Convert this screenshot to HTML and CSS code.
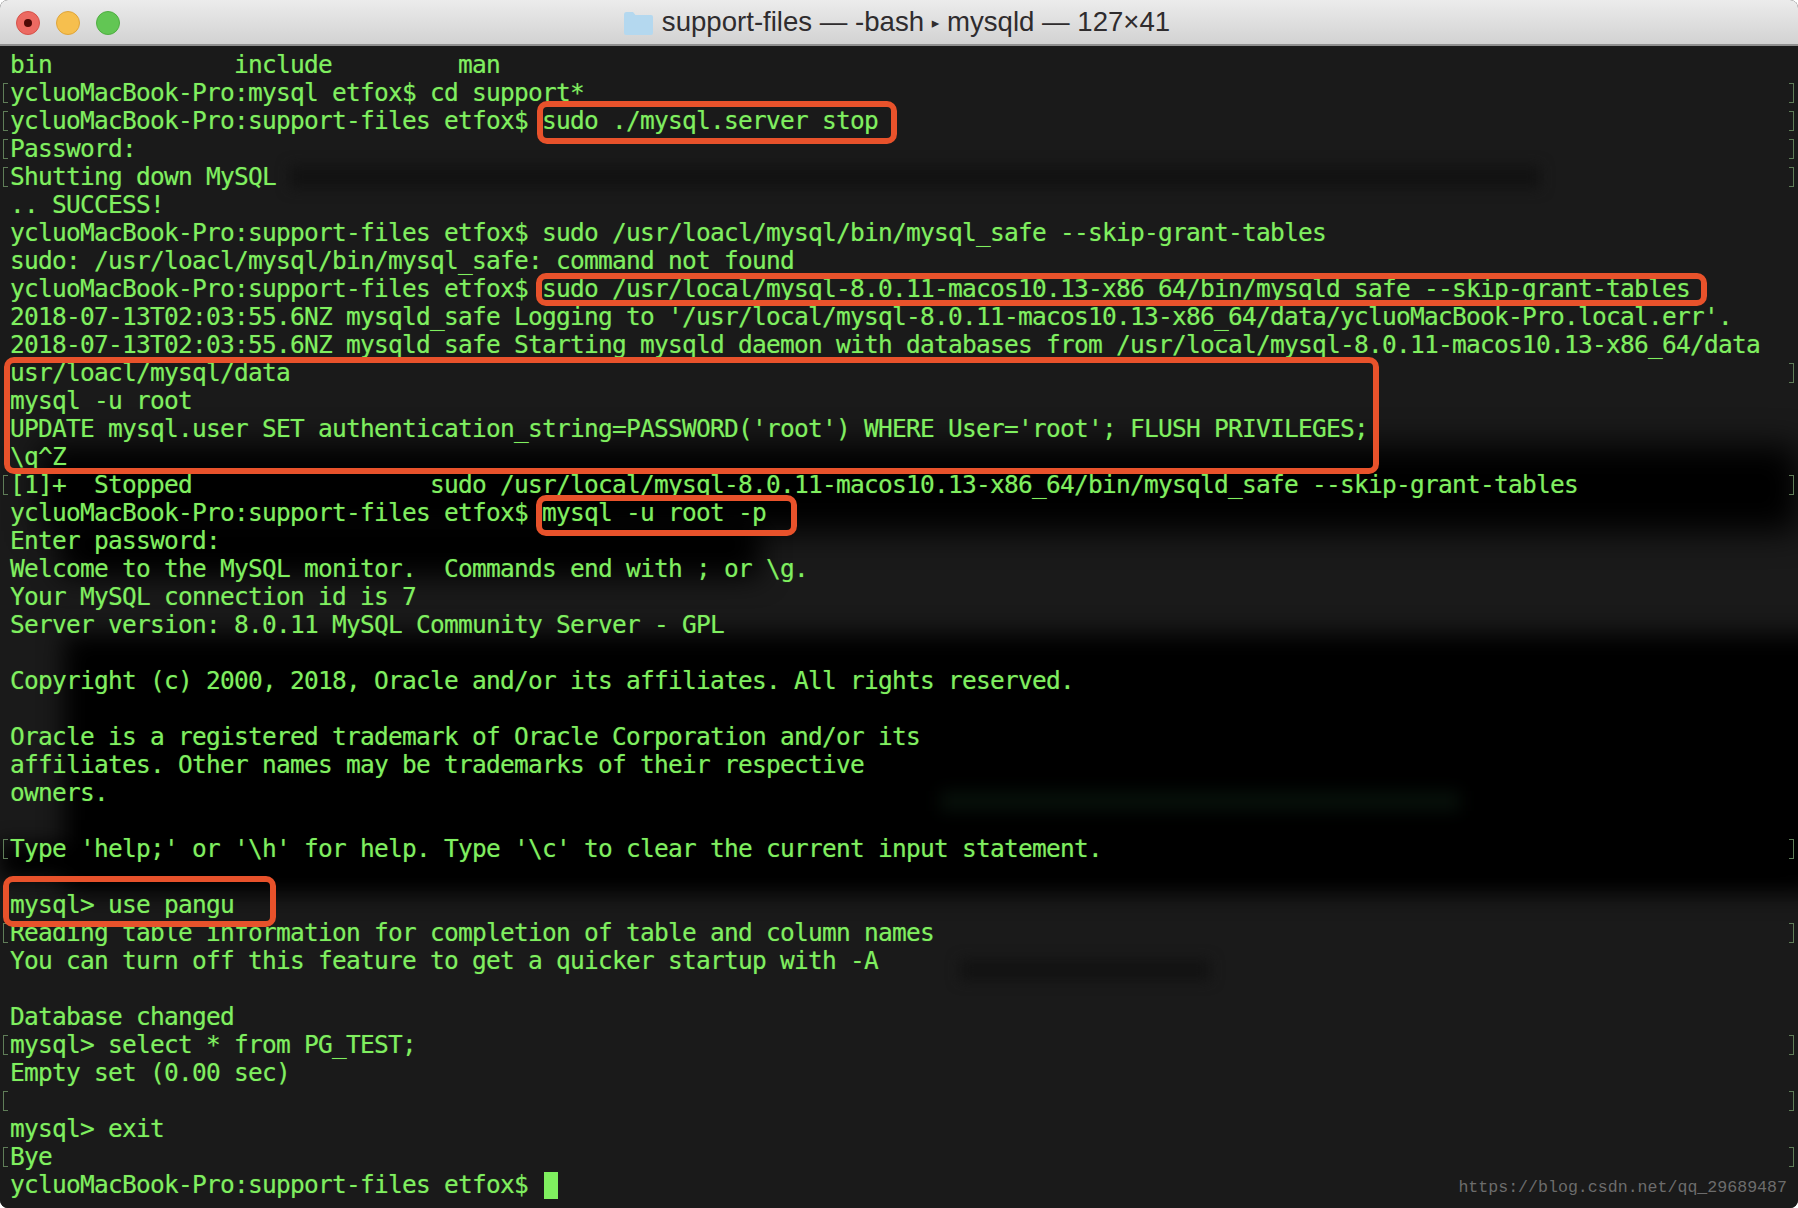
FILE: index.html
```html
<!DOCTYPE html>
<html lang="en">
<head>
<meta charset="utf-8">
<title>support-files — -bash ▸ mysqld — 127×41</title>
<link rel="stylesheet" href="styles.css">
</head>
<body>
<div class="window">
  <header class="titlebar">
    <div class="lights">
      <span class="light red"></span>
      <span class="light yellow"></span>
      <span class="light green"></span>
    </div>
    <div class="title">
      <svg class="folder" viewBox="0 0 30 24" aria-hidden="true"><path d="M1 3.5Q1 1 3 1H10L12.5 4H28Q30 4 30 6V22Q30 24 28 24H3Q1 24 1 22Z" fill="#b4d8ef"/></svg>
      <span>support-files — -bash <span class="sep">▸</span> mysqld — 127×41</span>
    </div>
    <div></div>
  </header>
  <main class="terminal">
    <div class="smear s1"></div>
    <div class="smear s2"></div>
    <div class="smear s3"></div>
    <div class="smear s4"></div>
    <div class="smear s5"></div>
    <div class="smear s6"></div>
    <div class="smear s7"></div>

    <div class="ln"><i></i><pre>bin             include         man</pre><i></i></div>
    <div class="ln m"><i></i><pre>ycluoMacBook-Pro:mysql etfox$ cd support*</pre><i></i></div>
    <div class="ln m"><i></i><pre>ycluoMacBook-Pro:support-files etfox$ sudo ./mysql.server stop</pre><i></i></div>
    <div class="ln m"><i></i><pre>Password:</pre><i></i></div>
    <div class="ln m"><i></i><pre>Shutting down MySQL</pre><i></i></div>
    <div class="ln"><i></i><pre>.. SUCCESS!</pre><i></i></div>
    <div class="ln"><i></i><pre>ycluoMacBook-Pro:support-files etfox$ sudo /usr/loacl/mysql/bin/mysql_safe --skip-grant-tables</pre><i></i></div>
    <div class="ln"><i></i><pre>sudo: /usr/loacl/mysql/bin/mysql_safe: command not found</pre><i></i></div>
    <div class="ln"><i></i><pre>ycluoMacBook-Pro:support-files etfox$ sudo /usr/local/mysql-8.0.11-macos10.13-x86_64/bin/mysqld_safe --skip-grant-tables</pre><i></i></div>
    <div class="ln"><i></i><pre>2018-07-13T02:03:55.6NZ mysqld_safe Logging to '/usr/local/mysql-8.0.11-macos10.13-x86_64/data/ycluoMacBook-Pro.local.err'.</pre><i></i></div>
    <div class="ln"><i></i><pre>2018-07-13T02:03:55.6NZ mysqld_safe Starting mysqld daemon with databases from /usr/local/mysql-8.0.11-macos10.13-x86_64/data</pre><i></i></div>
    <div class="ln mr"><i></i><pre>usr/loacl/mysql/data</pre><i></i></div>
    <div class="ln"><i></i><pre>mysql -u root</pre><i></i></div>
    <div class="ln"><i></i><pre>UPDATE mysql.user SET authentication_string=PASSWORD('root') WHERE User='root'; FLUSH PRIVILEGES;</pre><i></i></div>
    <div class="ln"><i></i><pre>\q^Z</pre><i></i></div>
    <div class="ln m"><i></i><pre>[1]+  Stopped                 sudo /usr/local/mysql-8.0.11-macos10.13-x86_64/bin/mysqld_safe --skip-grant-tables</pre><i></i></div>
    <div class="ln"><i></i><pre>ycluoMacBook-Pro:support-files etfox$ mysql -u root -p</pre><i></i></div>
    <div class="ln"><i></i><pre>Enter password:</pre><i></i></div>
    <div class="ln"><i></i><pre>Welcome to the MySQL monitor.  Commands end with ; or \g.</pre><i></i></div>
    <div class="ln"><i></i><pre>Your MySQL connection id is 7</pre><i></i></div>
    <div class="ln"><i></i><pre>Server version: 8.0.11 MySQL Community Server - GPL</pre><i></i></div>
    <div class="ln"><i></i><pre> </pre><i></i></div>
    <div class="ln"><i></i><pre>Copyright (c) 2000, 2018, Oracle and/or its affiliates. All rights reserved.</pre><i></i></div>
    <div class="ln"><i></i><pre> </pre><i></i></div>
    <div class="ln"><i></i><pre>Oracle is a registered trademark of Oracle Corporation and/or its</pre><i></i></div>
    <div class="ln"><i></i><pre>affiliates. Other names may be trademarks of their respective</pre><i></i></div>
    <div class="ln"><i></i><pre>owners.</pre><i></i></div>
    <div class="ln"><i></i><pre> </pre><i></i></div>
    <div class="ln m"><i></i><pre>Type 'help;' or '\h' for help. Type '\c' to clear the current input statement.</pre><i></i></div>
    <div class="ln"><i></i><pre> </pre><i></i></div>
    <div class="ln"><i></i><pre>mysql&gt; use pangu</pre><i></i></div>
    <div class="ln m"><i></i><pre>Reading table information for completion of table and column names</pre><i></i></div>
    <div class="ln"><i></i><pre>You can turn off this feature to get a quicker startup with -A</pre><i></i></div>
    <div class="ln"><i></i><pre> </pre><i></i></div>
    <div class="ln"><i></i><pre>Database changed</pre><i></i></div>
    <div class="ln m"><i></i><pre>mysql&gt; select * from PG_TEST;</pre><i></i></div>
    <div class="ln"><i></i><pre>Empty set (0.00 sec)</pre><i></i></div>
    <div class="ln m"><i></i><pre> </pre><i></i></div>
    <div class="ln"><i></i><pre>mysql&gt; exit</pre><i></i></div>
    <div class="ln m"><i></i><pre>Bye</pre><i></i></div>
    <div class="ln"><i></i><pre>ycluoMacBook-Pro:support-files etfox$ <span class="cursor"></span></pre><i></i></div>

    <div class="hl h1"></div>
    <div class="hl h2"></div>
    <div class="hl h3"></div>
    <div class="hl h4"></div>
    <div class="hl h5"></div>
    <div class="watermark">https://blog.csdn.net/qq_29689487</div>
  </main>
</div>
</body>
</html>
```

FILE: styles.css
```css
* { box-sizing: border-box; }
html, body { margin: 0; height: 100%; background: #fff; overflow: hidden; }

.window {
  width: 1798px;
  height: 1208px;
  display: flex;
  flex-direction: column;
  border-radius: 8px;
  overflow: hidden;
  background: #1a1a1a;
}

.titlebar {
  height: 46px;
  flex: none;
  display: grid;
  grid-template-columns: 1fr auto 1fr;
  align-items: center;
  background: linear-gradient(#ececec, #d2d2d2);
  border-bottom: 2px solid #8f8f8f;
}
.lights { display: flex; gap: 16px; padding-left: 16px; }
.light { width: 24px; height: 24px; border-radius: 50%; display: flex; align-items: center; justify-content: center; }
.red { background: #ec6a62; border: 1px solid #d65249; }
.red::after { content: ""; width: 8px; height: 8px; border-radius: 50%; background: #4e0a06; }
.yellow { background: #f6bf4e; border: 1px solid #dfa53a; }
.green { background: #62c654; border: 1px solid #4fae42; }

.title {
  display: flex;
  align-items: center;
  gap: 9px;
  margin-right: 5px;
  font-family: "Liberation Sans", Arial, sans-serif;
  font-size: 27.6px;
  line-height: 44px;
  color: #2f2c2e;
  white-space: nowrap;
}
.folder { width: 30px; height: 24px; flex: none; }
.sep { font-family: "DejaVu Sans", sans-serif; font-size: 15px; vertical-align: 3px; }

.terminal {
  position: relative;
  flex: 1;
  padding-top: 4.6px;
  overflow: hidden;
  background: #1a1a1a;
}

.ln {
  position: relative;
  z-index: 1;
  height: 28px;
  display: grid;
  grid-template-columns: 10px 1fr 9px;
  align-items: center;
}
.ln pre {
  margin: 0;
  font-family: "DejaVu Sans Mono", monospace;
  font-size: 24.5px;
  letter-spacing: -0.75px;
  line-height: 28px;
  color: #7fef5f;
  text-shadow: 0 0 1px rgba(127, 239, 95, 0.45);
  white-space: pre;
}
.ln i { display: block; width: 5px; height: 20px; }
.m i:first-child { margin-left: 3px; border: 1.5px solid #5f7d58; border-right: 0; }
.m i:last-child, .mr i:last-child { margin-left: 0; border: 1.5px solid #5f7d58; border-left: 0; }

.cursor {
  display: inline-block;
  width: 14px;
  height: 27px;
  margin-left: 2px;
  vertical-align: -6px;
  background: #7fef5f;
}

.smear { position: absolute; z-index: 0; }
.s1 { left: 290px; top: 120px; width: 1250px; height: 22px; background: #121212; filter: blur(7px); }
.s2 { left: 40px; top: 400px; width: 1758px; height: 85px; background: #000; filter: blur(16px); }
.s3 { left: 64px; top: 588px; width: 1760px; height: 258px; background: #000; filter: blur(12px); }
.s4 { left: 0; top: 798px; width: 1798px; height: 34px; background: #000; filter: blur(10px); }
.s5 { left: 940px; top: 745px; width: 520px; height: 20px; background: #07100a; filter: blur(8px); }
.s6 { left: 960px; top: 914px; width: 250px; height: 20px; background: #121212; filter: blur(7px); }
.s7 { left: 60px; top: 470px; width: 700px; height: 60px; background: #000; filter: blur(14px); }

.hl {
  position: absolute;
  z-index: 2;
  border: 6px solid #e8522b;
  border-radius: 10px;
}
.h1 { left: 537px; top: 55px; width: 360px; height: 43px; }
.h2 { left: 536px; top: 227px; width: 1171px; height: 33px; }
.h3 { left: 4px; top: 311px; width: 1375px; height: 117px; }
.h4 { left: 536px; top: 449px; width: 261px; height: 41px; }
.h5 { left: 3px; top: 830px; width: 273px; height: 51px; }

.watermark {
  position: absolute;
  z-index: 2;
  right: 11px;
  bottom: 10px;
  font-family: "Liberation Mono", monospace;
  font-size: 16.6px;
  line-height: 20px;
  color: #6c6c6c;
}
```
